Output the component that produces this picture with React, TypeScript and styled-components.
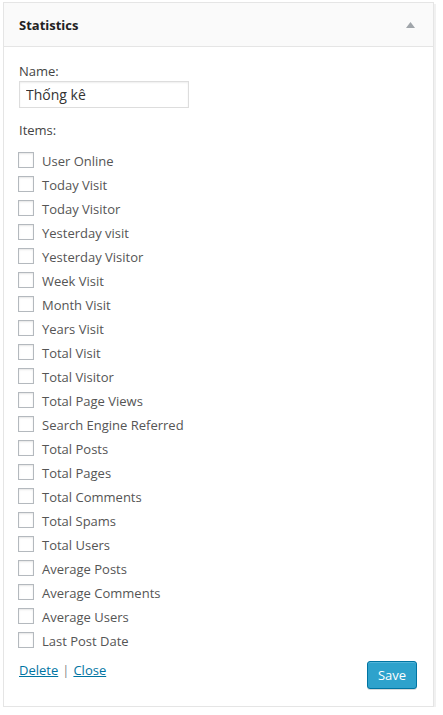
import styled, { createGlobalStyle } from "styled-components";

const items = [
  "User Online",
  "Today Visit",
  "Today Visitor",
  "Yesterday visit",
  "Yesterday Visitor",
  "Week Visit",
  "Month Visit",
  "Years Visit",
  "Total Visit",
  "Total Visitor",
  "Total Page Views",
  "Search Engine Referred",
  "Total Posts",
  "Total Pages",
  "Total Comments",
  "Total Spams",
  "Total Users",
  "Average Posts",
  "Average Comments",
  "Average Users",
  "Last Post Date",
];

function App() {
  return (
    <Page>
      <GlobalStyle />
      <Widget>
        <WidgetTop>
          <Title>Statistics</Title>
          <Toggle>
            <svg width="9" height="6" viewBox="0 0 9 6">
              <path d="M4.5 0 L9 6 L0 6 Z" fill="#a0a5aa" />
            </svg>
          </Toggle>
        </WidgetTop>

        <Inside>
          <Label>Name:</Label>
          <TextInput defaultValue="Thống kê" />

          <ItemsLabel>Items:</ItemsLabel>
          <List>
            {items.map((item) => (
              <Row key={item}>
                <Check type="checkbox" />
                <span>{item}</span>
              </Row>
            ))}
          </List>

          <Footer>
            <Links>
              <Link href="#">Delete</Link>
              <Sep>|</Sep>
              <Link href="#">Close</Link>
            </Links>
            <SaveBtn>Save</SaveBtn>
          </Footer>
        </Inside>
      </Widget>
    </Page>
  );
}
export default App;

const GlobalStyle = createGlobalStyle`
  body {
    margin: 0;
    background: #fff;
    font-family: "Open Sans", "Liberation Sans", sans-serif;
    font-size: 13px;
    color: #444;
  }
`;

const Page = styled.div`
  padding: 2px 9px 0 3px;
  width: 431px;
`;

const Widget = styled.div`
  border: 1px solid #e5e5e5;
  background: #fff;
  box-shadow: 2px 2px 0 #f1f1f1;
`;

const WidgetTop = styled.div`
  height: 43px;
  background: #fafafa;
  border-bottom: 1px solid #e5e5e5;
  display: flex;
  align-items: center;
  justify-content: space-between;
  padding: 0 18px 0 15px;
`;

const Title = styled.h3`
  margin: 0;
  font-size: 13px;
  font-weight: 700;
  color: #222;
`;

const Toggle = styled.span`
  display: flex;
  align-items: center;
`;

const Inside = styled.div`
  padding: 15px 15px 17px 15px;
`;

const Label = styled.div`
  line-height: 18px;
  margin-bottom: 1px;
`;

const TextInput = styled.input`
  box-sizing: border-box;
  width: 170px;
  height: 27px;
  border: 1px solid #ddd;
  box-shadow: inset 0 1px 2px rgba(0, 0, 0, 0.07);
  font-family: "Open Sans", "Liberation Sans", sans-serif;
  font-size: 14px;
  color: #333;
  padding: 2px 6px;
  outline: none;
`;

const ItemsLabel = styled(Label)`
  margin-top: 13px;
  margin-bottom: 0;
`;

const List = styled.div`
  display: flex;
  flex-direction: column;
  margin-top: 10px;
`;

const Row = styled.label`
  display: flex;
  align-items: center;
  gap: 8px;
  height: 24px;
  color: #555;
`;

const Check = styled.input`
  appearance: none;
  width: 16px;
  height: 16px;
  margin: -3px 0 0 -1px;
  border: 1px solid #b4b9be;
  background: #fff;
  box-shadow: inset 0 1px 2px rgba(0, 0, 0, 0.1);
  flex-shrink: 0;
`;

const Footer = styled.div`
  display: flex;
  justify-content: space-between;
  align-items: flex-start;
  margin-top: 8px;
`;

const Links = styled.div`
  display: flex;
  gap: 4px;
  line-height: 18px;
`;

const Link = styled.a`
  color: #0074a2;
  text-decoration: underline;
`;

const Sep = styled.span`
  color: #888;
`;

const SaveBtn = styled.button`
  width: 50px;
  height: 28px;
  margin-right: 1px;
  border: 1px solid #0074a2;
  border-radius: 3px;
  background: #2ea2cc;
  box-shadow: inset 0 1px 0 rgba(120, 200, 230, 0.5), 0 1px 0 rgba(0, 0, 0, 0.15);
  color: #fff;
  font-family: "Open Sans", "Liberation Sans", sans-serif;
  font-size: 13px;
  padding: 0;
`;
